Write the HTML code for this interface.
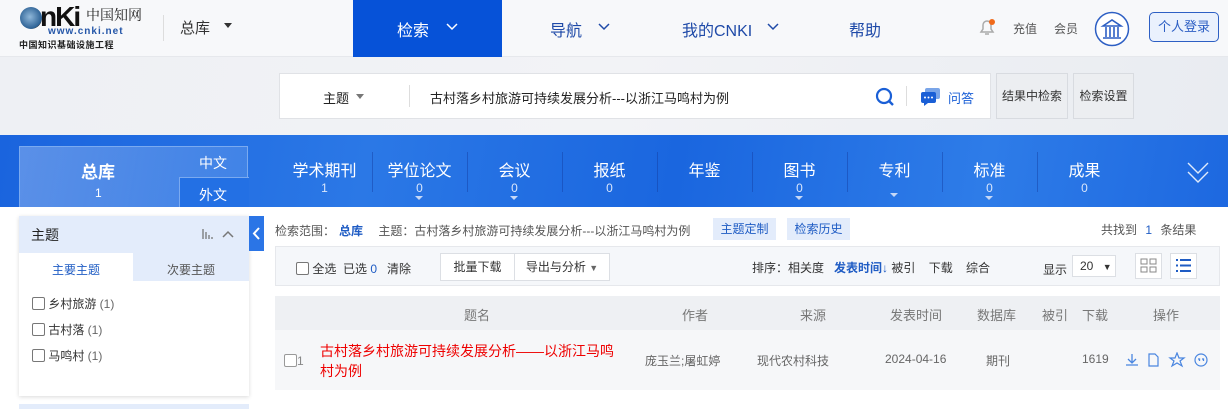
<!DOCTYPE html>
<html><head><meta charset="utf-8"><style>
*{box-sizing:border-box;margin:0;padding:0}
body{width:1228px;height:409px;overflow:hidden;background:#fff;font-family:"Liberation Sans","Noto Sans CJK SC",sans-serif;color:#333;position:relative;font-size:13px}
.a{position:absolute;white-space:nowrap}
.hdr{left:0;top:0;width:1228px;height:57px;background:#f7f8fa;border-bottom:1px solid #e6e8ec}
.band{left:0;top:57px;width:1228px;height:78px;background:linear-gradient(100deg,#eef0f4,#f2f3f6 50%,#e9ecf1)}
.blue{left:0;top:135px;width:1228px;height:72px;background:linear-gradient(100deg,#1a64de 0%,#2b78e6 30%,#1a66df 55%,#2e7ce8 80%,#1d68e0)}
.dbn{color:#fff;font-size:16px;text-align:center;width:95px}
.dbc{color:#d9e6fb;font-size:12px;text-align:center;width:95px}
.dv{width:1px;height:40px;top:152px;background:rgba(20,60,160,.45)}
.btn{background:#eceef1;border:1px solid #d8dbe0;font-size:12px;color:#333;text-align:center;line-height:44px}
.cb{display:inline-block;width:13px;height:13px;border:1px solid #777;border-radius:2px;vertical-align:-2px;background:#fff}
</style></head><body>
<div class="a hdr"></div>
<div class="a" style="left:20px;top:7px;width:22px;height:22px;border-radius:50%;background:radial-gradient(circle at 45% 45%,#8fb7d9,#2a5f93 70%,#222 72%)"></div>
<div class="a" style="left:40px;top:2px;font:900 28px/30px 'Liberation Sans',sans-serif;color:#111;letter-spacing:-2px">nKi</div>
<div class="a" style="left:86px;top:5px;font-size:14px;color:#222;font-family:'Noto Serif CJK SC',serif">中国知网</div>
<div class="a" style="left:48px;top:26px;font-size:10px;color:#2456a8;letter-spacing:1px;font-weight:bold">www.cnki.net</div>
<div class="a" style="left:19px;top:38px;font-size:9px;color:#222;font-weight:bold;letter-spacing:.5px">中国知识基础设施工程</div>
<div class="a" style="left:163px;top:15px;width:1px;height:26px;background:#ddd"></div>
<div class="a" style="left:180px;top:17px;font-size:15px;color:#333">总库</div>
<div class="a" style="left:224px;top:23px;border:4px solid transparent;border-top:5px solid #333"></div>
<div class="a" style="left:353px;top:0;width:149px;height:57px;background:#0652d8"></div>
<div class="a" style="left:397px;top:17px;font-size:16px;color:#fff">检索</div>
<svg class="a" style="left:446px;top:23px" width="12" height="8"><path d="M1 1l5 5 5-5" fill="none" stroke="#fff" stroke-width="1.5"/></svg>
<div class="a" style="left:550px;top:17px;font-size:16px;color:#1f4aa8">导航</div>
<svg class="a" style="left:598px;top:23px" width="12" height="8"><path d="M1 1l5 5 5-5" fill="none" stroke="#1f4aa8" stroke-width="1.5"/></svg>
<div class="a" style="left:682px;top:17px;font-size:16px;color:#1f4aa8">我的CNKI</div>
<svg class="a" style="left:767px;top:23px" width="12" height="8"><path d="M1 1l5 5 5-5" fill="none" stroke="#1f4aa8" stroke-width="1.5"/></svg>
<div class="a" style="left:849px;top:17px;font-size:16px;color:#1f4aa8">帮助</div>
<svg class="a" style="left:976px;top:16px" width="22" height="22" viewBox="0 0 22 22"><path d="M5 16h12l-2-3V9a4 4 0 0 0-8 0v4z M9 18h4" fill="none" stroke="#aaa" stroke-width="1.5"/><circle cx="16" cy="6" r="3" fill="#f06a1a"/></svg>
<div class="a" style="left:1013px;top:20px;font-size:12px;color:#555">充值</div>
<div class="a" style="left:1054px;top:20px;font-size:12px;color:#555">会员</div>
<svg class="a" style="left:1094px;top:11px" width="36" height="36" viewBox="0 0 36 36"><circle cx="18" cy="18" r="16.5" fill="#fff" stroke="#2d5fc4" stroke-width="1.5"/><path d="M9 15l9-6 9 6z M10 15h16 M12 16v10 M16 16v10 M20 16v10 M24 16v10 M9 27h18" fill="none" stroke="#2d5fc4" stroke-width="1.6"/></svg>
<div class="a" style="left:1149px;top:12px;width:70px;height:30px;border:1px solid #2d5fc4;border-radius:5px;background:#eaf1fd;color:#2d5fc4;font-size:13px;text-align:center;line-height:28px">个人登录</div>

<div class="a band"></div>
<div class="a" style="left:279px;top:73px;width:712px;height:46px;background:#fff;border:1px solid #e0e2e6"></div>
<div class="a" style="left:323px;top:88px;font-size:13px;color:#222">主题</div>
<div class="a" style="left:356px;top:94px;border:4px solid transparent;border-top:5px solid #777"></div>
<div class="a" style="left:409px;top:85px;width:1px;height:22px;background:#ddd"></div>
<div class="a" style="left:430px;top:88px;font-size:13px;color:#222">古村落乡村旅游可持续发展分析---以浙江马鸣村为例</div>
<svg class="a" style="left:874px;top:86px" width="22" height="22" viewBox="0 0 22 22"><circle cx="10" cy="10" r="7" fill="none" stroke="#1a5fd6" stroke-width="2.2"/><path d="M15 15l4 4" stroke="#1a5fd6" stroke-width="2.4"/></svg>
<div class="a" style="left:906px;top:86px;width:1px;height:20px;background:#ddd"></div>
<svg class="a" style="left:920px;top:87px" width="22" height="20" viewBox="0 0 22 20"><rect x="5" y="1" width="15" height="11" rx="2" fill="#7aa5e8"/><rect x="1" y="5" width="15" height="11" rx="2" fill="#1a5fd6"/><path d="M4 16l0 3 4-3" fill="#1a5fd6"/><circle cx="5" cy="10.5" r="1" fill="#fff"/><circle cx="8.5" cy="10.5" r="1" fill="#fff"/><circle cx="12" cy="10.5" r="1" fill="#fff"/></svg>
<div class="a" style="left:948px;top:88px;font-size:13px;color:#1a5fd6">问答</div>
<div class="a btn" style="left:996px;top:73px;width:72px;height:46px">结果中检索</div>
<div class="a btn" style="left:1073px;top:73px;width:61px;height:46px">检索设置</div>

<div class="a blue"></div>
<div class="a" style="left:19px;top:146px;width:229px;height:61px;border:1px solid #7aaaf0;border-bottom:none;background:linear-gradient(100deg,rgba(255,255,255,.28),rgba(255,255,255,.12))"></div>
<div class="a" style="left:179px;top:177px;width:70px;height:30px;background:#2370e4;border-top:1px solid #7aaaf0;border-left:1px solid #7aaaf0"></div>
<div class="a" style="left:81px;top:158px;font-size:17px;font-weight:bold;color:#fff">总库</div>
<div class="a" style="left:95px;top:186px;font-size:12px;color:#fff">1</div>
<div class="a" style="left:199px;top:153px;font-size:14px;color:#fff">中文</div>
<div class="a" style="left:199px;top:185px;font-size:14px;color:#fff">外文</div>
<div class="a dbn" style="left:277px;top:157px">学术期刊</div><div class="a dbc" style="left:277px;top:181px">1</div>
<div class="a dv" style="left:372px"></div>
<div class="a dbn" style="left:372px;top:157px">学位论文</div><div class="a dbc" style="left:372px;top:181px">0</div>
<div class="a dv" style="left:467px"></div>
<div class="a dbn" style="left:467px;top:157px">会议</div><div class="a dbc" style="left:467px;top:181px">0</div>
<div class="a dv" style="left:562px"></div>
<div class="a dbn" style="left:562px;top:157px">报纸</div><div class="a dbc" style="left:562px;top:181px">0</div>
<div class="a dv" style="left:657px"></div>
<div class="a dbn" style="left:657px;top:157px">年鉴</div>
<div class="a dv" style="left:752px"></div>
<div class="a dbn" style="left:752px;top:157px">图书</div><div class="a dbc" style="left:752px;top:181px">0</div>
<div class="a dv" style="left:847px"></div>
<div class="a dbn" style="left:847px;top:157px">专利</div>
<div class="a dv" style="left:942px"></div>
<div class="a dbn" style="left:942px;top:157px">标准</div><div class="a dbc" style="left:942px;top:181px">0</div>
<div class="a dv" style="left:1037px"></div>
<div class="a dbn" style="left:1037px;top:157px">成果</div><div class="a dbc" style="left:1037px;top:181px">0</div>
<div class="a" style="left:415px;top:196px;border:4px solid transparent;border-top:4px solid #c5d8f7"></div>
<div class="a" style="left:510px;top:196px;border:4px solid transparent;border-top:4px solid #c5d8f7"></div>
<div class="a" style="left:795px;top:196px;border:4px solid transparent;border-top:4px solid #c5d8f7"></div>
<div class="a" style="left:890px;top:193px;border:4px solid transparent;border-top:4px solid #c5d8f7"></div>
<div class="a" style="left:985px;top:196px;border:4px solid transparent;border-top:4px solid #c5d8f7"></div>
<svg class="a" style="left:1186px;top:160px" width="24" height="26" viewBox="0 0 24 26"><path d="M2 3l10 10 10-10 M2 12l10 10 10-10" fill="none" stroke="#e0ebfc" stroke-width="1.4"/></svg>

<div class="a" style="left:19px;top:216px;width:230px;height:180px;background:#fff;box-shadow:0 1px 4px rgba(0,0,0,.15)"></div>
<div class="a" style="left:19px;top:216px;width:230px;height:37px;background:#e3ecfb"></div>
<div class="a" style="left:31px;top:225px;font-size:14px;color:#222">主题</div>
<svg class="a" style="left:202px;top:229px" width="12" height="10"><path d="M1 0v10M4 3v7M7 6v4M10 8v2" stroke="#777" stroke-width="1.3"/></svg>
<svg class="a" style="left:222px;top:230px" width="12" height="8"><path d="M1 7l5-5 5 5" fill="none" stroke="#777" stroke-width="1.5"/></svg>
<div class="a" style="left:133px;top:253px;width:116px;height:28px;background:#e3ecfb"></div>
<div class="a" style="left:52px;top:261px;font-size:12px;color:#1f5cc4">主要主题</div>
<div class="a" style="left:167px;top:261px;font-size:12px;color:#555">次要主题</div>
<div class="a" style="left:32px;top:295px;font-size:12px;color:#333"><span class="cb"></span> 乡村旅游 <span style="color:#666">(1)</span></div>
<div class="a" style="left:32px;top:321px;font-size:12px;color:#333"><span class="cb"></span> 古村落 <span style="color:#666">(1)</span></div>
<div class="a" style="left:32px;top:347px;font-size:12px;color:#333"><span class="cb"></span> 马鸣村 <span style="color:#666">(1)</span></div>
<div class="a" style="left:19px;top:404px;width:230px;height:5px;background:#e3ecfb"></div>
<div class="a" style="left:249px;top:216px;width:15px;height:35px;background:#2b75e6"></div>
<svg class="a" style="left:252px;top:227px" width="9" height="13"><path d="M7 1L2 6.5 7 12" fill="none" stroke="#fff" stroke-width="2"/></svg>

<div class="a" style="left:275px;top:222px;font-size:12px;color:#555">检索范围：<span style="color:#1f5cc4;font-weight:bold;margin:0 12px 0 4px">总库</span> 主题：古村落乡村旅游可持续发展分析---以浙江马鸣村为例</div>
<div class="a" style="left:713px;top:218px;width:63px;height:22px;background:#e3ecfb;color:#1f5cc4;font-size:12px;text-align:center;line-height:22px">主题定制</div>
<div class="a" style="left:787px;top:218px;width:63px;height:22px;background:#e3ecfb;color:#1f5cc4;font-size:12px;text-align:center;line-height:22px">检索历史</div>
<div class="a" style="left:1101px;top:221px;font-size:12px;color:#555">共找到 <span style="color:#1f5cc4;margin:0 5px">1</span> 条结果</div>
<div class="a" style="left:275px;top:246px;width:945px;height:40px;background:#f5f7fa;border:1px solid #e6e8ec"></div>
<div class="a" style="left:296px;top:260px;font-size:12px;color:#333"><span class="cb"></span> 全选 &nbsp;已选 <span style="color:#1f5cc4">0</span> &nbsp;&nbsp;清除</div>
<div class="a" style="left:440px;top:253px;width:75px;height:28px;background:#fff;border:1px solid #dcdfe4;font-size:12px;text-align:center;line-height:26px">批量下载</div>
<div class="a" style="left:514px;top:253px;width:96px;height:28px;background:#fff;border:1px solid #dcdfe4;font-size:12px;text-align:center;line-height:26px">导出与分析 <span style="font-size:9px;color:#666">▼</span></div>
<div class="a" style="left:752px;top:259px;font-size:12px;color:#333">排序：相关度 &nbsp;&nbsp;<span style="color:#1f5cc4;font-weight:bold">发表时间↓</span> 被引 &nbsp;&nbsp;&nbsp;下载 &nbsp;&nbsp;&nbsp;综合</div>
<div class="a" style="left:1043px;top:261px;font-size:12px;color:#333">显示</div>
<div class="a" style="left:1072px;top:255px;width:44px;height:22px;background:#fff;border:1px solid #dcdfe4;font-size:12px;line-height:20px;padding-left:7px">20 <span style="font-size:9px;margin-left:6px">▼</span></div>
<div class="a" style="left:1135px;top:253px;width:27px;height:26px;border:1px solid #dcdfe4;background:#fff"></div>
<svg class="a" style="left:1140px;top:258px" width="17" height="16"><rect x="1" y="1" width="6" height="5" fill="none" stroke="#888"/><rect x="10" y="1" width="6" height="5" fill="none" stroke="#888"/><rect x="1" y="9" width="6" height="5" fill="none" stroke="#888"/><rect x="10" y="9" width="6" height="5" fill="none" stroke="#888"/></svg>
<div class="a" style="left:1170px;top:253px;width:27px;height:26px;border:1px solid #dcdfe4;background:#fff"></div>
<svg class="a" style="left:1175px;top:258px" width="17" height="16"><path d="M1 2h2M5 2h11M1 7.5h2M5 7.5h11M1 13h2M5 13h11" stroke="#1f5cc4" stroke-width="2"/></svg>

<div class="a" style="left:275px;top:296px;width:945px;height:34px;background:#eef0f3"></div>
<div class="a" style="left:464px;top:305px;font-size:13px;color:#777">题名</div>
<div class="a" style="left:682px;top:305px;font-size:13px;color:#777">作者</div>
<div class="a" style="left:800px;top:305px;font-size:13px;color:#777">来源</div>
<div class="a" style="left:890px;top:305px;font-size:13px;color:#777">发表时间</div>
<div class="a" style="left:977px;top:305px;font-size:13px;color:#777">数据库</div>
<div class="a" style="left:1042px;top:305px;font-size:13px;color:#777">被引</div>
<div class="a" style="left:1082px;top:305px;font-size:13px;color:#777">下载</div>
<div class="a" style="left:1153px;top:305px;font-size:13px;color:#777">操作</div>
<div class="a" style="left:275px;top:330px;width:945px;height:60px;background:#f6f7f9"></div>
<div class="a" style="left:284px;top:354px;font-size:12px;color:#888"><span class="cb" style="border-color:#999"></span>1</div>
<div class="a" style="left:320px;top:341px;font-size:14px;color:#e00;line-height:20px;white-space:normal;width:300px;word-break:break-all">古村落乡村旅游可持续发展分析——以浙江马鸣村为例</div>
<div class="a" style="left:645px;top:352px;font-size:12px;color:#666">庞玉兰;屠虹婷</div>
<div class="a" style="left:757px;top:352px;font-size:12px;color:#666">现代农村科技</div>
<div class="a" style="left:885px;top:352px;font-size:12px;color:#666">2024-04-16</div>
<div class="a" style="left:986px;top:352px;font-size:12px;color:#666">期刊</div>
<div class="a" style="left:1082px;top:352px;font-size:12px;color:#666">1619</div>
<svg class="a" style="left:1124px;top:352px" width="90" height="16" viewBox="0 0 90 16"><path d="M8 2v9M4 7l4 4 4-4M2 13h12" fill="none" stroke="#4a86e0" stroke-width="1.3"/><path d="M25 2h6l3 3v9h-9z" fill="none" stroke="#4a86e0" stroke-width="1.2"/><path d="M53 1l2 5h5l-4 3 2 5-5-3-5 3 2-5-4-3h5z" fill="none" stroke="#4a86e0" stroke-width="1.2"/><circle cx="77" cy="8" r="6" fill="none" stroke="#4a86e0" stroke-width="1.2"/><path d="M74 7h1.5v2M78 7h1.5v2" stroke="#4a86e0" stroke-width="1.3" fill="none"/></svg>
</body></html>
